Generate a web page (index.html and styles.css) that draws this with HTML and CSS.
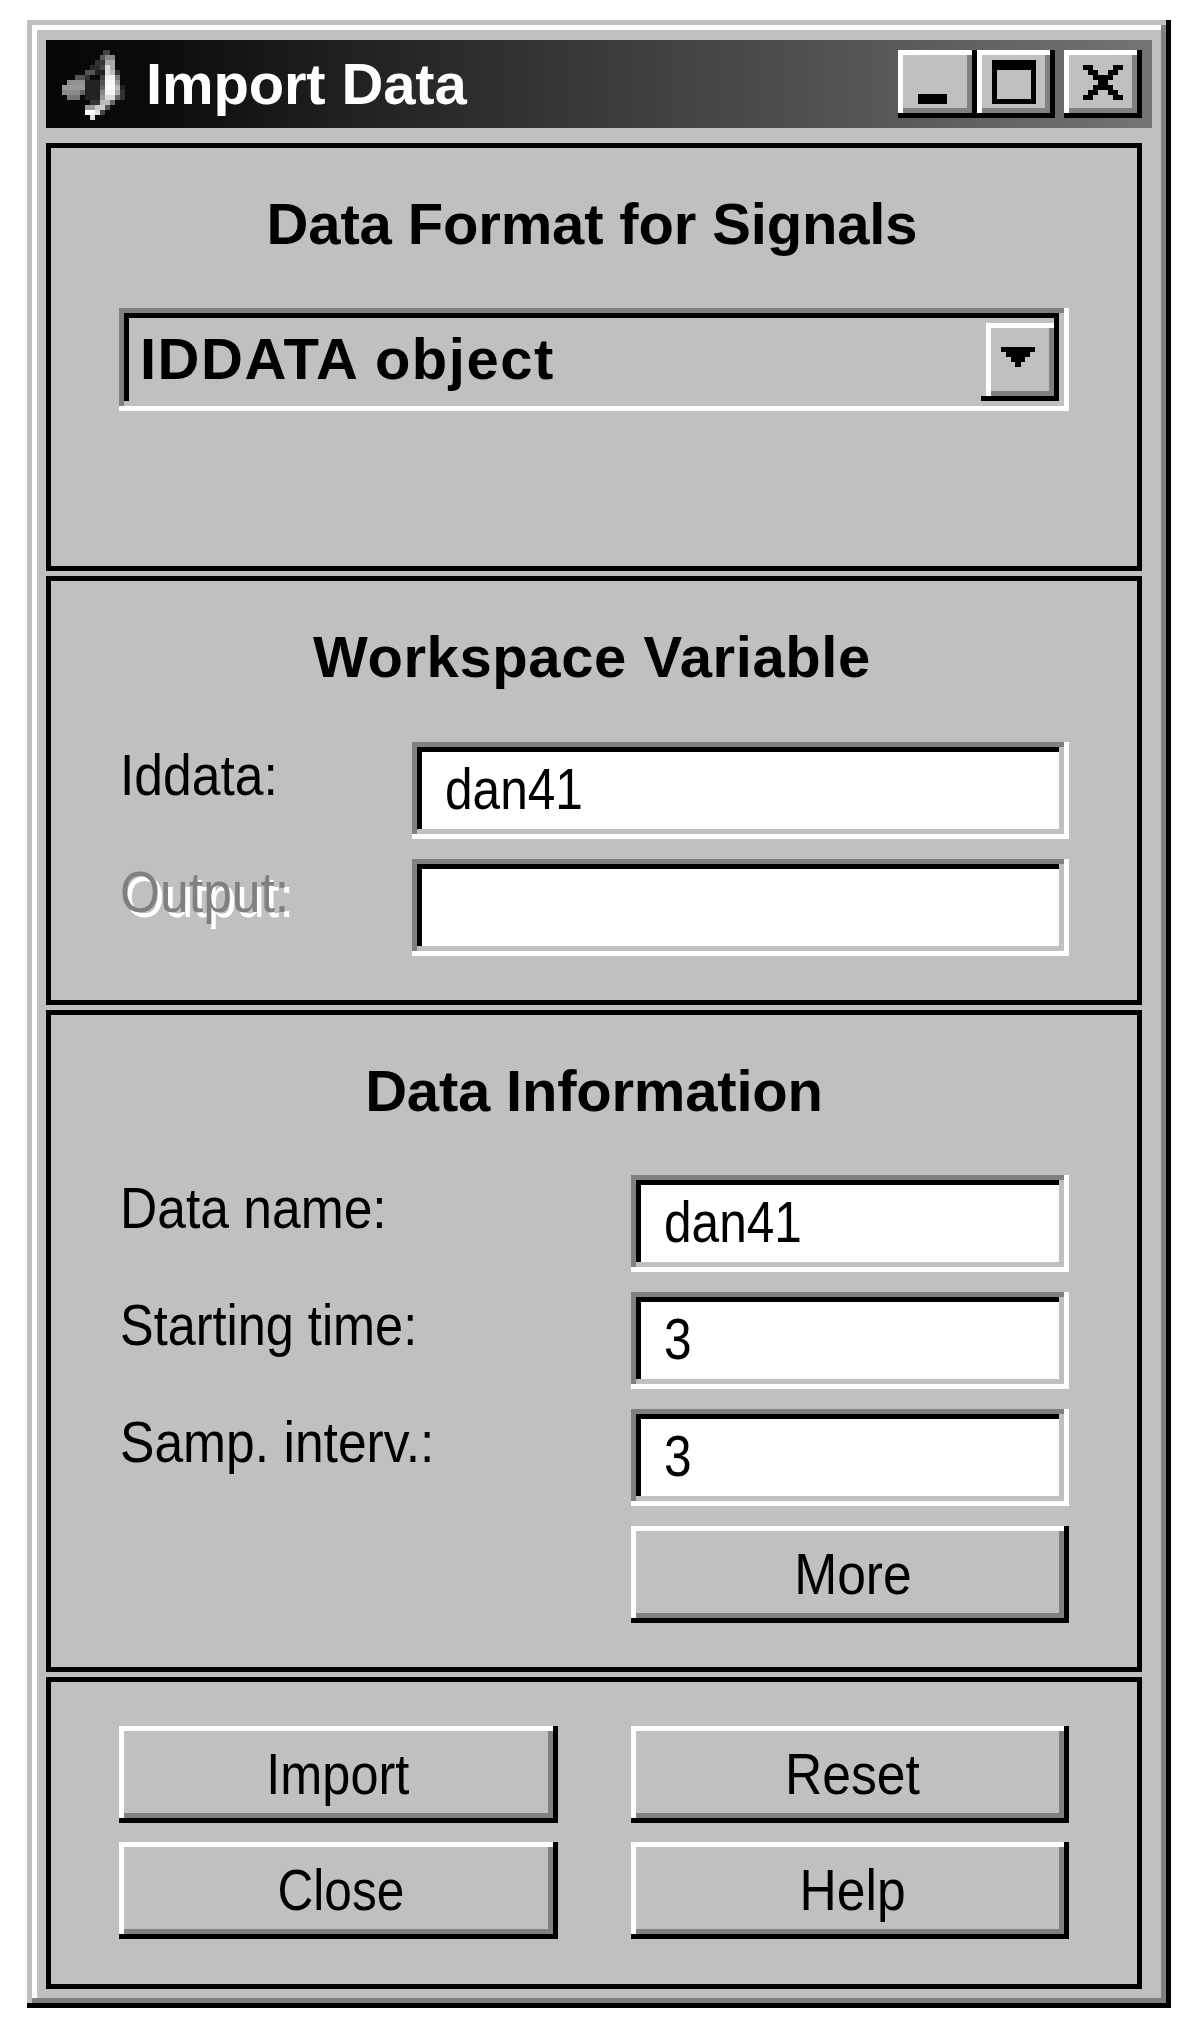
FILE: index.html
```html
<!DOCTYPE html>
<html lang="en">
<head>
<meta charset="utf-8">
<title>Import Data</title>
<link rel="stylesheet" href="styles.css">
</head>
<body>
<div class="window">
  <div class="titlebar">
    <svg class="app-icon" viewBox="18 30 240 264" shape-rendering="crispEdges" aria-hidden="true">
      <rect x="190" y="60" width="20" height="15" fill="#444"/>
      <rect x="180" y="75" width="15" height="15" fill="#555"/>
      <rect x="195" y="75" width="30" height="15" fill="#888"/>
      <rect x="165" y="90" width="30" height="15" fill="#333"/>
      <rect x="195" y="90" width="30" height="15" fill="#aaa"/>
      <rect x="150" y="105" width="30" height="15" fill="#2a2a2a"/>
      <rect x="180" y="105" width="15" height="15" fill="#444"/>
      <rect x="195" y="105" width="15" height="15" fill="#ddd"/>
      <rect x="210" y="105" width="15" height="15" fill="#aaa"/>
      <rect x="135" y="120" width="30" height="15" fill="#555"/>
      <rect x="165" y="120" width="30" height="15" fill="#222"/>
      <rect x="195" y="120" width="15" height="15" fill="#ddd"/>
      <rect x="210" y="120" width="15" height="15" fill="#bbb"/>
      <rect x="225" y="120" width="15" height="15" fill="#333"/>
      <rect x="105" y="135" width="30" height="15" fill="#555"/>
      <rect x="135" y="135" width="15" height="15" fill="#333"/>
      <rect x="180" y="135" width="15" height="15" fill="#444"/>
      <rect x="195" y="135" width="30" height="15" fill="#f0f0f0"/>
      <rect x="225" y="135" width="15" height="15" fill="#777"/>
      <rect x="80" y="150" width="55" height="15" fill="#909090"/>
      <rect x="135" y="150" width="45" height="15" fill="#222"/>
      <rect x="180" y="150" width="15" height="15" fill="#555"/>
      <rect x="195" y="150" width="30" height="15" fill="#f8f8f8"/>
      <rect x="225" y="150" width="15" height="15" fill="#999"/>
      <rect x="65" y="165" width="70" height="15" fill="#999"/>
      <rect x="135" y="165" width="45" height="15" fill="#222"/>
      <rect x="180" y="165" width="15" height="15" fill="#666"/>
      <rect x="195" y="165" width="30" height="15" fill="#fff"/>
      <rect x="225" y="165" width="15" height="15" fill="#bbb"/>
      <rect x="240" y="165" width="15" height="15" fill="#222"/>
      <rect x="65" y="180" width="55" height="15" fill="#8a8a8a"/>
      <rect x="120" y="180" width="15" height="15" fill="#666"/>
      <rect x="135" y="180" width="45" height="15" fill="#222"/>
      <rect x="180" y="180" width="15" height="15" fill="#888"/>
      <rect x="195" y="180" width="30" height="15" fill="#f4f4f4"/>
      <rect x="225" y="180" width="15" height="15" fill="#aaa"/>
      <rect x="240" y="180" width="15" height="15" fill="#333"/>
      <rect x="80" y="195" width="40" height="15" fill="#777"/>
      <rect x="135" y="195" width="45" height="15" fill="#222"/>
      <rect x="180" y="195" width="15" height="15" fill="#999"/>
      <rect x="195" y="195" width="30" height="15" fill="#ddd"/>
      <rect x="225" y="195" width="15" height="15" fill="#666"/>
      <rect x="240" y="195" width="15" height="15" fill="#333"/>
      <rect x="150" y="210" width="30" height="15" fill="#333"/>
      <rect x="180" y="210" width="30" height="15" fill="#bbb"/>
      <rect x="210" y="210" width="15" height="15" fill="#666"/>
      <rect x="135" y="225" width="30" height="15" fill="#999"/>
      <rect x="165" y="225" width="30" height="15" fill="#ccc"/>
      <rect x="195" y="225" width="15" height="15" fill="#555"/>
      <rect x="135" y="240" width="30" height="15" fill="#fff"/>
      <rect x="165" y="240" width="15" height="15" fill="#ddd"/>
      <rect x="180" y="240" width="15" height="15" fill="#444"/>
      <rect x="150" y="255" width="15" height="15" fill="#ddd"/>
    </svg>
    <span class="title-text">Import Data</span>
    <div class="win-btn btn-min">
      <svg viewBox="0 0 79 68" aria-hidden="true"><rect x="20" y="44" width="29" height="10"/></svg>
    </div>
    <div class="win-btn btn-max">
      <svg viewBox="0 0 78 68" aria-hidden="true"><path fill-rule="evenodd" d="M15 10 H59 V54 H15 Z M20 20 V49 H54 V20 Z"/></svg>
    </div>
    <div class="win-btn btn-close">
      <svg viewBox="0 0 78 68" shape-rendering="crispEdges" aria-hidden="true"><path d="M19 15h10v5h-10z M49 15h10v5h-10z M24 20h10v5h-10z M44 20h10v5h-10z M29 25h20v5h-20z M34 30h10v5h-10z M29 35h20v5h-20z M24 40h10v5h-10z M44 40h10v5h-10z M19 45h10v5h-10z M49 45h10v5h-10z"/></svg>
    </div>
  </div>

  <section class="panel panel-format">
    <h2 class="heading heading-format">Data Format for Signals</h2>
    <div class="popup">
      <span class="popup-value">IDDATA object</span>
      <div class="popup-arrow">
        <svg viewBox="0 0 73 78" shape-rendering="crispEdges" aria-hidden="true"><path d="M15 24h34v5h-34z M20 29h24v5h-24z M25 34h14v5h-14z M29 39h6v5h-6z"/></svg>
      </div>
    </div>
  </section>

  <section class="panel panel-workspace">
    <h2 class="heading heading-workspace">Workspace Variable</h2>
    <div class="form form-wide">
      <div class="label"><span class="sx sx-wide">Iddata:</span></div>
      <div class="field"><span class="sx sx-tight">dan41</span></div>
      <div class="label label-disabled"><span class="sx sx-wide">Output:</span></div>
      <div class="field"></div>
    </div>
  </section>

  <section class="panel panel-info">
    <h2 class="heading heading-info">Data Information</h2>
    <div class="form form-narrow">
      <div class="label"><span class="sx sx-wide">Data name:</span></div>
      <div class="field"><span class="sx sx-tight">dan41</span></div>
      <div class="label"><span class="sx sx-mid">Starting time:</span></div>
      <div class="field"><span class="sx sx-tight">3</span></div>
      <div class="label"><span class="sx sx-wide">Samp. interv.:</span></div>
      <div class="field"><span class="sx sx-tight">3</span></div>
      <div class="spacer"></div>
      <div class="button"><span class="sx sx-wide">More</span></div>
    </div>
  </section>

  <section class="panel panel-actions">
    <div class="actions">
      <div class="button button-first"><span class="sx">Import</span></div>
      <div class="button"><span class="sx sx-wide">Reset</span></div>
      <div class="button"><span class="sx sx-tight">Close</span></div>
      <div class="button"><span class="sx sx-wide">Help</span></div>
    </div>
  </section>
</div>
</body>
</html>
```

FILE: styles.css
```css
* { box-sizing: border-box; }

html, body { margin: 0; background: #fff; }

body {
  padding: 20px 0 0 27px;
  width: 1199px;
  height: 2040px;
  overflow: hidden;
  font-family: "Liberation Sans", Arial, sans-serif;
  font-size: 57px;
  line-height: 60px;
  color: #000;
}

.window {
  width: 1144px;
  height: 1988px;
  padding: 20px 19px 19px;
  background: #c0c0c0;
  display: flex;
  flex-direction: column;
  gap: 5px;
  box-shadow:
    inset -5px -5px 0 #000,
    inset 5px 5px 0 #c0c0c0,
    inset -10px -10px 0 #808080,
    inset 10px 10px 0 #fff;
}

.titlebar {
  height: 88px;
  flex: none;
  margin-bottom: 10px;
  padding-right: 10px;
  display: flex;
  align-items: center;
  background: linear-gradient(90deg, #060606 0%, #0c0c0c 10%, #747474 100%);
}

.app-icon { width: 80px; height: 88px; flex: none; }

.title-text {
  margin-left: 20px;
  font-size: 58px;
  font-weight: 700;
  color: #fff;
  letter-spacing: -0.15px;
}

.win-btn {
  width: 78px;
  height: 68px;
  flex: none;
  background: #c0c0c0;
  box-shadow:
    inset -5px -5px 0 #000,
    inset 5px 5px 0 #fff,
    inset -10px -10px 0 #808080;
}

.win-btn svg { display: block; width: 100%; height: 100%; }

.btn-min { margin-left: auto; width: 79px; }
.btn-close { margin-left: 9px; }

.panel {
  flex: none;
  margin-right: 10px;
  border: 5px solid #000;
  padding: 46px 68px 0;
  background: #c0c0c0;
}

.panel-format { height: 428px; }
.panel-workspace { height: 429px; }
.panel-info { height: 662px; }
.panel-actions { height: 312px; padding-top: 44px; }

.heading {
  margin: 0;
  padding-right: 4px;
  font-size: 58px;
  font-weight: 700;
  line-height: 60px;
  text-align: center;
}

.heading-format { letter-spacing: -0.15px; }
.heading-workspace { letter-spacing: 0.6px; }
.heading-info { letter-spacing: -0.2px; padding-right: 0; }

.popup {
  height: 103px;
  margin-top: 54px;
  padding: 0 10px 0 21px;
  display: flex;
  align-items: center;
  justify-content: space-between;
  box-shadow:
    inset -5px -5px 0 #fff,
    inset 5px 5px 0 #808080,
    inset -10px -10px 0 #c0c0c0,
    inset 10px 10px 0 #000;
}

.popup-value {
  font-size: 58px;
  font-weight: 700;
  letter-spacing: 1.5px;
  margin-top: -2px;
}

.popup-arrow {
  position: relative;
  width: 73px;
  height: 78px;
  margin-top: 5px;
  background: #c0c0c0;
  box-shadow:
    inset -5px -5px 0 #000,
    inset 5px 5px 0 #fff,
    inset -10px -10px 0 #808080;
}

.popup-arrow::before,
.popup-arrow::after {
  content: "";
  position: absolute;
  width: 5px;
  height: 5px;
  background: #000;
}

.popup-arrow::before { right: 0; top: -5px; }
.popup-arrow::after { left: -5px; bottom: 0; }

.popup-arrow svg { display: block; width: 100%; height: 100%; }

.form {
  margin-top: 55px;
  display: grid;
  grid-auto-rows: 97px;
  row-gap: 20px;
}

.form-wide { grid-template-columns: 293px 1fr; }
.form-narrow { grid-template-columns: 512px 1fr; margin-top: 54px; }

.label { padding: 3px 0 0 1px; white-space: nowrap; }

.label-disabled {
  color: #808080;
  text-shadow: 5px 5px 0 #fff;
}

.sx {
  display: inline-block;
  transform: scaleX(0.885);
  transform-origin: left center;
  white-space: nowrap;
}

.sx-wide { transform: scaleX(0.905); }
.sx-mid { transform: scaleX(0.885); }
.sx-tight { transform: scaleX(0.87); }

.field {
  padding: 0 0 3px 33px;
  display: flex;
  align-items: center;
  background: #fff;
  box-shadow:
    inset -5px -5px 0 #fff,
    inset 5px 5px 0 #808080,
    inset -10px -10px 0 #c0c0c0,
    inset 10px 10px 0 #000;
}

.button {
  display: flex;
  align-items: center;
  justify-content: center;
  padding: 0 0 1px 5px;
  background: #c0c0c0;
  box-shadow:
    inset -5px -5px 0 #000,
    inset 5px 5px 0 #fff,
    inset -10px -10px 0 #808080;
}

.button-first { padding-left: 0; }

.button .sx { transform-origin: center; }

.actions {
  display: grid;
  grid-template-columns: 1fr 1fr;
  grid-auto-rows: 97px;
  column-gap: 73px;
  row-gap: 19px;
}
```
